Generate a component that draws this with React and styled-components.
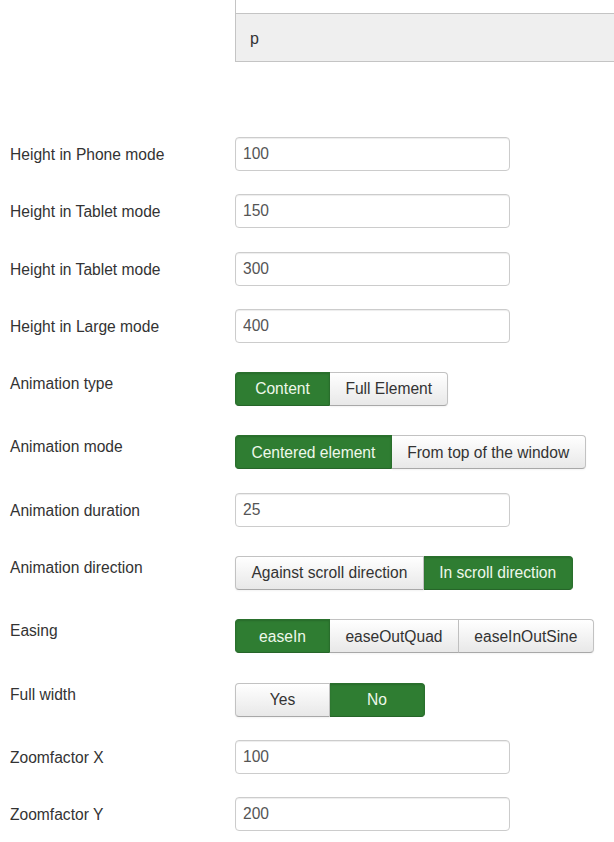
import React from "react";
import styled, { createGlobalStyle } from "styled-components";

const Global = createGlobalStyle`
  html, body { margin: 0; padding: 0; background: #fff; overflow: hidden; }
  body { font-family: "Liberation Sans", Arial, sans-serif; font-size: 15.6px; color: #333; }
  * { box-sizing: border-box; }
`;

const Page = styled.div`
  padding-left: 10px;
  display: flex;
  flex-direction: column;
`;

const EditorRow = styled.div`
  display: grid;
  grid-template-columns: 225px 1fr;
  margin-bottom: 75px;
`;

const Editor = styled.div`
  border-left: 1px solid #c4c4c4;
  border-bottom: 1px solid #c4c4c4;
  display: flex;
  flex-direction: column;
`;

const EditorBody = styled.div`
  height: 14px;
  background: #fff;
  border-bottom: 1px solid #c4c4c4;
`;

const StatusBar = styled.div`
  height: 47px;
  background: #efefef;
  display: flex;
  align-items: center;
  padding-left: 14px;
  padding-top: 3px;
  font-size: 16px;
  color: #333;
`;

const Row = styled.div`
  display: grid;
  grid-template-columns: 225px 1fr;
  margin-bottom: 23.3px;
`;

const Label = styled.div`
  padding-top: 7px;
  line-height: 21.6px;
  color: #333;
  white-space: nowrap;
`;

const Control = styled.div`
  padding-top: ${(p) => (p.$buttons ? "6px" : "0")};
  display: flex;
`;

const Input = styled.input`
  width: 275px;
  height: 34px;
  border: 1px solid #ccc;
  border-radius: 4px;
  padding: 0 7px;
  font-family: "Liberation Sans", Arial, sans-serif;
  font-size: 15.6px;
  color: #555;
  background: #fff;
  box-shadow: inset 0 1px 1px rgba(0, 0, 0, 0.075);
  outline: none;
`;

const Group = styled.div`
  display: inline-flex;
`;

const Btn = styled.button`
  height: 34px;
  min-width: 95px;
  padding: 0 15.4px;
  font-family: "Liberation Sans", Arial, sans-serif;
  font-size: 15.6px;
  line-height: 21.6px;
  white-space: nowrap;
  cursor: pointer;
  margin: 0;
  border: 1px solid ${(p) => (p.$active ? "#2a702d" : "#c2c2c2")};
  border-bottom-color: ${(p) => (p.$active ? "#266529" : "#a8a8a8")};
  color: ${(p) => (p.$active ? "#eef8ea" : "#333")};
  background: ${(p) =>
    p.$active ? "#2f7d32" : "linear-gradient(to bottom, #ffffff, #e8e8e8)"};
  box-shadow: ${(p) =>
    p.$active
      ? "inset 0 1px 2px rgba(0,0,0,0.15)"
      : "inset 0 1px 0 rgba(255,255,255,0.2), 0 1px 2px rgba(0,0,0,0.05)"};
  & + & {
    border-left-width: 0;
  }
  &:first-child {
    border-radius: 4px 0 0 4px;
  }
  &:last-child {
    border-radius: 0 4px 4px 0;
  }
`;

const rows = [
  { label: "Height in Phone mode", value: "100" },
  { label: "Height in Tablet mode", value: "150" },
  { label: "Height in Tablet mode", value: "300" },
  { label: "Height in Large mode", value: "400" },
  { label: "Animation type", options: ["Content", "Full Element"], active: 0 },
  {
    label: "Animation mode",
    options: ["Centered element", "From top of the window"],
    active: 0,
  },
  { label: "Animation duration", value: "25" },
  {
    label: "Animation direction",
    options: ["Against scroll direction", "In scroll direction"],
    active: 1,
  },
  { label: "Easing", options: ["easeIn", "easeOutQuad", "easeInOutSine"], active: 0 },
  { label: "Full width", options: ["Yes", "No"], active: 1 },
  { label: "Zoomfactor X", value: "100" },
  { label: "Zoomfactor Y", value: "200" },
];

export default function App() {
  return (
    <>
      <Global />
      <Page>
        <EditorRow>
          <div />
          <Editor>
            <EditorBody />
            <StatusBar>p</StatusBar>
          </Editor>
        </EditorRow>
        {rows.map((r, i) => (
          <Row key={i}>
            <Label>{r.label}</Label>
            {r.options ? (
              <Control $buttons>
                <Group>
                  {r.options.map((o, j) => (
                    <Btn key={o} type="button" $active={j === r.active}>
                      {o}
                    </Btn>
                  ))}
                </Group>
              </Control>
            ) : (
              <Control>
                <Input type="text" defaultValue={r.value} />
              </Control>
            )}
          </Row>
        ))}
      </Page>
    </>
  );
}
